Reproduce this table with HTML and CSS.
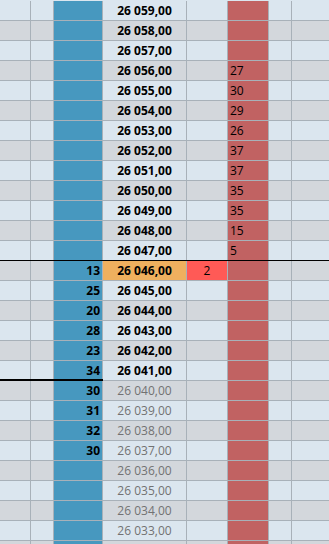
FILE: index.html
```html
<!DOCTYPE html>
<html>
<head>
<meta charset="utf-8">
<link rel="stylesheet" href="styles.css">
</head>
<body>
<div class="ladder">
  <div class="row"><div class="c c1"></div><div class="c c2"></div><div class="c bid"></div><div class="c price">26 059,00</div><div class="c c5"></div><div class="c ask"></div><div class="c c7"></div><div class="c c8"></div></div>
  <div class="row"><div class="c c1"></div><div class="c c2"></div><div class="c bid"></div><div class="c price">26 058,00</div><div class="c c5"></div><div class="c ask"></div><div class="c c7"></div><div class="c c8"></div></div>
  <div class="row"><div class="c c1"></div><div class="c c2"></div><div class="c bid"></div><div class="c price">26 057,00</div><div class="c c5"></div><div class="c ask"></div><div class="c c7"></div><div class="c c8"></div></div>
  <div class="row"><div class="c c1"></div><div class="c c2"></div><div class="c bid"></div><div class="c price">26 056,00</div><div class="c c5"></div><div class="c ask">27</div><div class="c c7"></div><div class="c c8"></div></div>
  <div class="row"><div class="c c1"></div><div class="c c2"></div><div class="c bid"></div><div class="c price">26 055,00</div><div class="c c5"></div><div class="c ask">30</div><div class="c c7"></div><div class="c c8"></div></div>
  <div class="row"><div class="c c1"></div><div class="c c2"></div><div class="c bid"></div><div class="c price">26 054,00</div><div class="c c5"></div><div class="c ask">29</div><div class="c c7"></div><div class="c c8"></div></div>
  <div class="row"><div class="c c1"></div><div class="c c2"></div><div class="c bid"></div><div class="c price">26 053,00</div><div class="c c5"></div><div class="c ask">26</div><div class="c c7"></div><div class="c c8"></div></div>
  <div class="row"><div class="c c1"></div><div class="c c2"></div><div class="c bid"></div><div class="c price">26 052,00</div><div class="c c5"></div><div class="c ask">37</div><div class="c c7"></div><div class="c c8"></div></div>
  <div class="row"><div class="c c1"></div><div class="c c2"></div><div class="c bid"></div><div class="c price">26 051,00</div><div class="c c5"></div><div class="c ask">37</div><div class="c c7"></div><div class="c c8"></div></div>
  <div class="row"><div class="c c1"></div><div class="c c2"></div><div class="c bid"></div><div class="c price">26 050,00</div><div class="c c5"></div><div class="c ask">35</div><div class="c c7"></div><div class="c c8"></div></div>
  <div class="row"><div class="c c1"></div><div class="c c2"></div><div class="c bid"></div><div class="c price">26 049,00</div><div class="c c5"></div><div class="c ask">35</div><div class="c c7"></div><div class="c c8"></div></div>
  <div class="row"><div class="c c1"></div><div class="c c2"></div><div class="c bid"></div><div class="c price">26 048,00</div><div class="c c5"></div><div class="c ask">15</div><div class="c c7"></div><div class="c c8"></div></div>
  <div class="row spread-top"><div class="c c1"></div><div class="c c2"></div><div class="c bid"></div><div class="c price">26 047,00</div><div class="c c5"></div><div class="c ask">5</div><div class="c c7"></div><div class="c c8"></div></div>
  <div class="row"><div class="c c1"></div><div class="c c2"></div><div class="c bid">13</div><div class="c price last">26 046,00</div><div class="c c5 trade">2</div><div class="c ask"></div><div class="c c7"></div><div class="c c8"></div></div>
  <div class="row"><div class="c c1"></div><div class="c c2"></div><div class="c bid">25</div><div class="c price">26 045,00</div><div class="c c5"></div><div class="c ask"></div><div class="c c7"></div><div class="c c8"></div></div>
  <div class="row"><div class="c c1"></div><div class="c c2"></div><div class="c bid">20</div><div class="c price">26 044,00</div><div class="c c5"></div><div class="c ask"></div><div class="c c7"></div><div class="c c8"></div></div>
  <div class="row"><div class="c c1"></div><div class="c c2"></div><div class="c bid">28</div><div class="c price">26 043,00</div><div class="c c5"></div><div class="c ask"></div><div class="c c7"></div><div class="c c8"></div></div>
  <div class="row"><div class="c c1"></div><div class="c c2"></div><div class="c bid">23</div><div class="c price">26 042,00</div><div class="c c5"></div><div class="c ask"></div><div class="c c7"></div><div class="c c8"></div></div>
  <div class="row depth-end"><div class="c c1"></div><div class="c c2"></div><div class="c bid">34</div><div class="c price">26 041,00</div><div class="c c5"></div><div class="c ask"></div><div class="c c7"></div><div class="c c8"></div></div>
  <div class="row"><div class="c c1"></div><div class="c c2"></div><div class="c bid">30</div><div class="c price dim">26 040,00</div><div class="c c5"></div><div class="c ask"></div><div class="c c7"></div><div class="c c8"></div></div>
  <div class="row"><div class="c c1"></div><div class="c c2"></div><div class="c bid">31</div><div class="c price dim">26 039,00</div><div class="c c5"></div><div class="c ask"></div><div class="c c7"></div><div class="c c8"></div></div>
  <div class="row"><div class="c c1"></div><div class="c c2"></div><div class="c bid">32</div><div class="c price dim">26 038,00</div><div class="c c5"></div><div class="c ask"></div><div class="c c7"></div><div class="c c8"></div></div>
  <div class="row"><div class="c c1"></div><div class="c c2"></div><div class="c bid">30</div><div class="c price dim">26 037,00</div><div class="c c5"></div><div class="c ask"></div><div class="c c7"></div><div class="c c8"></div></div>
  <div class="row"><div class="c c1"></div><div class="c c2"></div><div class="c bid"></div><div class="c price dim">26 036,00</div><div class="c c5"></div><div class="c ask"></div><div class="c c7"></div><div class="c c8"></div></div>
  <div class="row"><div class="c c1"></div><div class="c c2"></div><div class="c bid"></div><div class="c price dim">26 035,00</div><div class="c c5"></div><div class="c ask"></div><div class="c c7"></div><div class="c c8"></div></div>
  <div class="row"><div class="c c1"></div><div class="c c2"></div><div class="c bid"></div><div class="c price dim">26 034,00</div><div class="c c5"></div><div class="c ask"></div><div class="c c7"></div><div class="c c8"></div></div>
  <div class="row"><div class="c c1"></div><div class="c c2"></div><div class="c bid"></div><div class="c price dim">26 033,00</div><div class="c c5"></div><div class="c ask"></div><div class="c c7"></div><div class="c c8"></div></div>
  <div class="row"><div class="c c1"></div><div class="c c2"></div><div class="c bid"></div><div class="c price dim"></div><div class="c c5"></div><div class="c ask"></div><div class="c c7"></div><div class="c c8"></div></div>
</div>
</body>
</html>
```
FILE: styles.css
```css
html, body {
  margin: 0;
  padding: 0;
  background: #dbe6ef;
  overflow: hidden;
}
.ladder {
  padding-top: 1px;
  font-family: "Open Sans", "DejaVu Sans", sans-serif;
  font-size: 12px;
  line-height: 19px;
  color: #000;
}
.row {
  position: relative;
  display: grid;
  grid-template-columns: 30px 22px 48px 83px 40px 40px 22px 1fr;
  column-gap: 1px;
  background: #a8b1b9;
  border-bottom: 1px solid #a8b1b9;
}
.row:nth-child(odd) .c { background: #dbe6ef; }
.row:nth-child(even) .c { background: #d3d7dc; }
.c {
  height: 19px;
  white-space: nowrap;
  overflow: hidden;
}
.row .c.bid {
  background: #4798bf;
  text-align: right;
  padding-right: 2px;
  font-weight: 700;
}
.row .c.ask {
  background: #c16262;
  padding-left: 2px;
}
.price {
  text-align: center;
  font-weight: 700;
}
.price.dim {
  font-weight: 400;
  color: #727272;
}
.row .c.price.last { background: #efb05e; }
.row .c.trade {
  background: #ff5a56;
  text-align: center;
}
.row.spread-top { border-bottom-color: #000; }
.depth-end::after {
  content: "";
  position: absolute;
  left: 0;
  width: 103px;
  bottom: -2px;
  height: 3px;
  background: #000;
}
```
